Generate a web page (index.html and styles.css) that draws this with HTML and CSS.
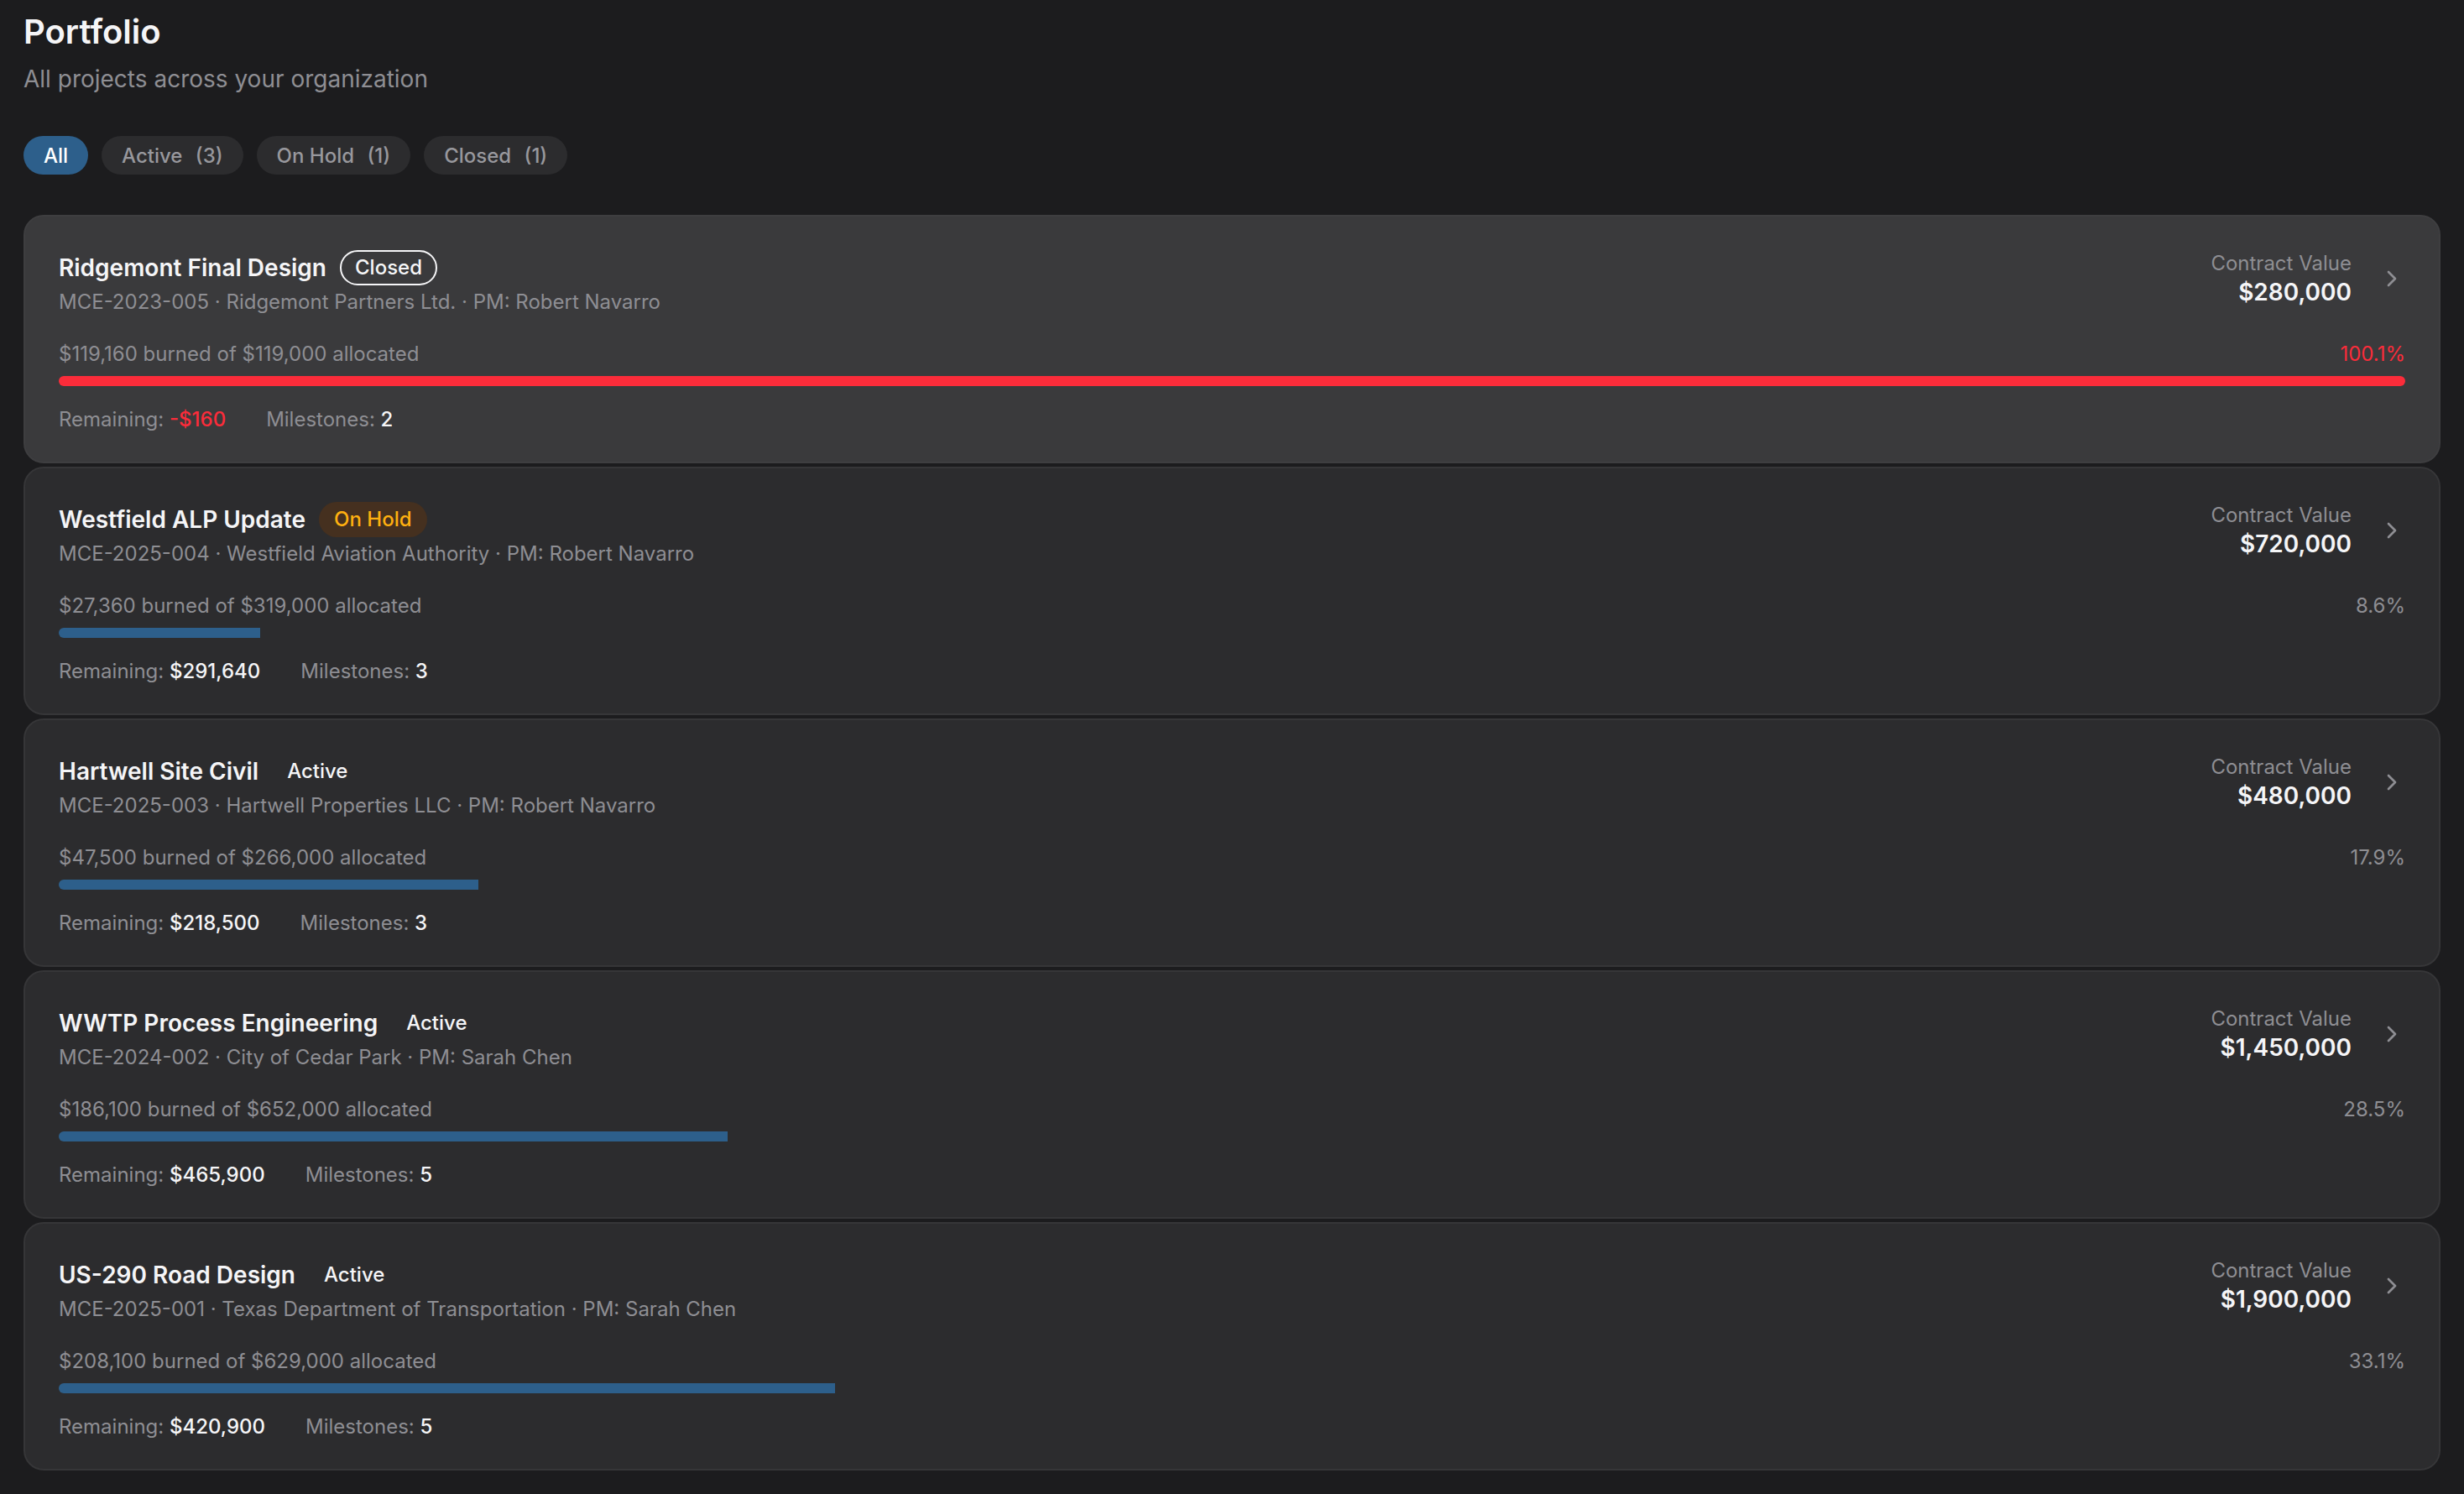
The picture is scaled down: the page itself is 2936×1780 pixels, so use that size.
FILE: index.html
```html
<!DOCTYPE html>
<html>
<head>
  <title>Portfolio</title>
  <link rel="stylesheet" href="styles.css">
</head>
<body>

  <div class="page">
    <h1>Portfolio</h1>
    <p class="subtitle">All projects across your organization</p>

    <div class="filters">
      <button class="pill active">All</button>
      <button class="pill">Active <span class="count">(3)</span></button>
      <button class="pill">On Hold <span class="count">(1)</span></button>
      <button class="pill">Closed <span class="count">(1)</span></button>
    </div>

    <div class="project-list">

      <div class="card highlighted">
        <div class="card-head">
          <div>
            <div class="title-row">
              <span class="title">Ridgemont Final Design</span>
              <span class="badge closed">Closed</span>
            </div>
            <div class="meta">MCE-2023-005 · Ridgemont Partners Ltd. · PM: Robert Navarro</div>
          </div>
          <div class="value-block">
            <div class="value">
              <div class="value-label">Contract Value</div>
              <div class="value-amount">$280,000</div>
            </div>
            <svg class="chevron" viewBox="0 0 24 24"><path d="m9 18 6-6-6-6"/></svg>
          </div>
        </div>
        <div class="budget-row">
          <span>$119,160 burned of $119,000 allocated</span>
          <span class="over">100.1%</span>
        </div>
        <div class="bar"><div class="bar-fill over" style="width: 100%"></div></div>
        <div class="stats">
          <span>Remaining: <strong class="over">-$160</strong></span>
          <span>Milestones: <strong>2</strong></span>
        </div>
      </div>

      <div class="card">
        <div class="card-head">
          <div>
            <div class="title-row">
              <span class="title">Westfield ALP Update</span>
              <span class="badge on-hold">On Hold</span>
            </div>
            <div class="meta">MCE-2025-004 · Westfield Aviation Authority · PM: Robert Navarro</div>
          </div>
          <div class="value-block">
            <div class="value">
              <div class="value-label">Contract Value</div>
              <div class="value-amount">$720,000</div>
            </div>
            <svg class="chevron" viewBox="0 0 24 24"><path d="m9 18 6-6-6-6"/></svg>
          </div>
        </div>
        <div class="budget-row">
          <span>$27,360 burned of $319,000 allocated</span>
          <span>8.6%</span>
        </div>
        <div class="bar"><div class="bar-fill" style="width: 8.6%"></div></div>
        <div class="stats">
          <span>Remaining: <strong>$291,640</strong></span>
          <span>Milestones: <strong>3</strong></span>
        </div>
      </div>

      <div class="card">
        <div class="card-head">
          <div>
            <div class="title-row">
              <span class="title">Hartwell Site Civil</span>
              <span class="badge">Active</span>
            </div>
            <div class="meta">MCE-2025-003 · Hartwell Properties LLC · PM: Robert Navarro</div>
          </div>
          <div class="value-block">
            <div class="value">
              <div class="value-label">Contract Value</div>
              <div class="value-amount">$480,000</div>
            </div>
            <svg class="chevron" viewBox="0 0 24 24"><path d="m9 18 6-6-6-6"/></svg>
          </div>
        </div>
        <div class="budget-row">
          <span>$47,500 burned of $266,000 allocated</span>
          <span>17.9%</span>
        </div>
        <div class="bar"><div class="bar-fill" style="width: 17.9%"></div></div>
        <div class="stats">
          <span>Remaining: <strong>$218,500</strong></span>
          <span>Milestones: <strong>3</strong></span>
        </div>
      </div>

      <div class="card">
        <div class="card-head">
          <div>
            <div class="title-row">
              <span class="title">WWTP Process Engineering</span>
              <span class="badge">Active</span>
            </div>
            <div class="meta">MCE-2024-002 · City of Cedar Park · PM: Sarah Chen</div>
          </div>
          <div class="value-block">
            <div class="value">
              <div class="value-label">Contract Value</div>
              <div class="value-amount">$1,450,000</div>
            </div>
            <svg class="chevron" viewBox="0 0 24 24"><path d="m9 18 6-6-6-6"/></svg>
          </div>
        </div>
        <div class="budget-row">
          <span>$186,100 burned of $652,000 allocated</span>
          <span>28.5%</span>
        </div>
        <div class="bar"><div class="bar-fill" style="width: 28.5%"></div></div>
        <div class="stats">
          <span>Remaining: <strong>$465,900</strong></span>
          <span>Milestones: <strong>5</strong></span>
        </div>
      </div>

      <div class="card">
        <div class="card-head">
          <div>
            <div class="title-row">
              <span class="title">US-290 Road Design</span>
              <span class="badge">Active</span>
            </div>
            <div class="meta">MCE-2025-001 · Texas Department of Transportation · PM: Sarah Chen</div>
          </div>
          <div class="value-block">
            <div class="value">
              <div class="value-label">Contract Value</div>
              <div class="value-amount">$1,900,000</div>
            </div>
            <svg class="chevron" viewBox="0 0 24 24"><path d="m9 18 6-6-6-6"/></svg>
          </div>
        </div>
        <div class="budget-row">
          <span>$208,100 burned of $629,000 allocated</span>
          <span>33.1%</span>
        </div>
        <div class="bar"><div class="bar-fill" style="width: 33.1%"></div></div>
        <div class="stats">
          <span>Remaining: <strong>$420,900</strong></span>
          <span>Milestones: <strong>5</strong></span>
        </div>
      </div>

    </div>
  </div>

</body>
</html>
```

FILE: styles.css
```css
body {
  margin: 0;
  font-family: Inter, 'Noto Sans', sans-serif;
  background-color: #1c1c1e;
  color: #f5f5f7;
}

.page {
  padding: 10px 28px 26px;
}

h1 {
  margin: 0;
  font-size: 40px;
  line-height: 56px;
  font-weight: 600;
}

.subtitle {
  margin: 8px 0 0;
  font-size: 28px;
  line-height: 40px;
  color: #8e8e93;
}

.filters {
  display: flex;
  gap: 16px;
  margin-top: 48px;
}

.pill {
  height: 46px;
  padding: 0 24px;
  border: none;
  border-radius: 999px;
  background-color: #2c2c2e;
  color: #98989d;
  font-family: inherit;
  font-size: 24px;
  font-weight: 500;
  cursor: pointer;
}

.pill.active {
  background-color: #2d5f8b;
  color: #fff;
}

.pill .count {
  margin-left: 9px;
}

.project-list {
  display: flex;
  flex-direction: column;
  gap: 4px;
  margin-top: 48px;
}

.card {
  padding: 40px 40px 34px;
  background-color: #2c2c2e;
  border: 2px solid #363638;
  border-radius: 24px;
}

.card.highlighted {
  background-color: #3a3a3c;
  border-color: #3e3e40;
}

.card-head {
  display: flex;
  justify-content: space-between;
  align-items: flex-start;
  gap: 32px;
}

.title-row {
  display: flex;
  align-items: center;
  gap: 16px;
}

.title {
  font-size: 28px;
  line-height: 40px;
  font-weight: 600;
}

.badge {
  padding: 3px 16px;
  border: 2px solid transparent;
  border-radius: 999px;
  font-size: 24px;
  line-height: 32px;
  font-weight: 500;
}

.badge.closed {
  border-color: #f5f5f7;
}

.badge.on-hold {
  background-color: #45301f;
  color: #ffb010;
}

.meta {
  margin-top: 4px;
  font-size: 24px;
  line-height: 32px;
  color: #8e8e93;
}

.value-block {
  display: flex;
  align-items: center;
  gap: 32px;
}

.value {
  text-align: right;
}

.value-label {
  font-size: 24px;
  line-height: 32px;
  color: #8e8e93;
}

.value-amount {
  font-size: 28px;
  line-height: 36px;
  font-weight: 600;
}

.chevron {
  width: 32px;
  height: 32px;
  fill: none;
  stroke: #8e8e93;
  stroke-width: 2;
  stroke-linecap: round;
  stroke-linejoin: round;
}

.budget-row {
  display: flex;
  justify-content: space-between;
  margin-top: 30px;
  font-size: 24px;
  line-height: 32px;
  color: #8e8e93;
}

.bar {
  height: 12px;
  margin-top: 10px;
  border-radius: 6px;
  overflow: hidden;
}

.bar-fill {
  height: 100%;
  background-color: #2d5f8b;
}

.bar-fill.over {
  background-color: #fb2c3a;
}

.over {
  color: #fb2c3a;
}

.stats {
  display: flex;
  gap: 48px;
  margin-top: 24px;
  font-size: 24px;
  line-height: 32px;
  color: #8e8e93;
}

.stats strong {
  font-weight: 500;
  color: #f5f5f7;
}

.stats strong.over {
  color: #fb2c3a;
}
```
